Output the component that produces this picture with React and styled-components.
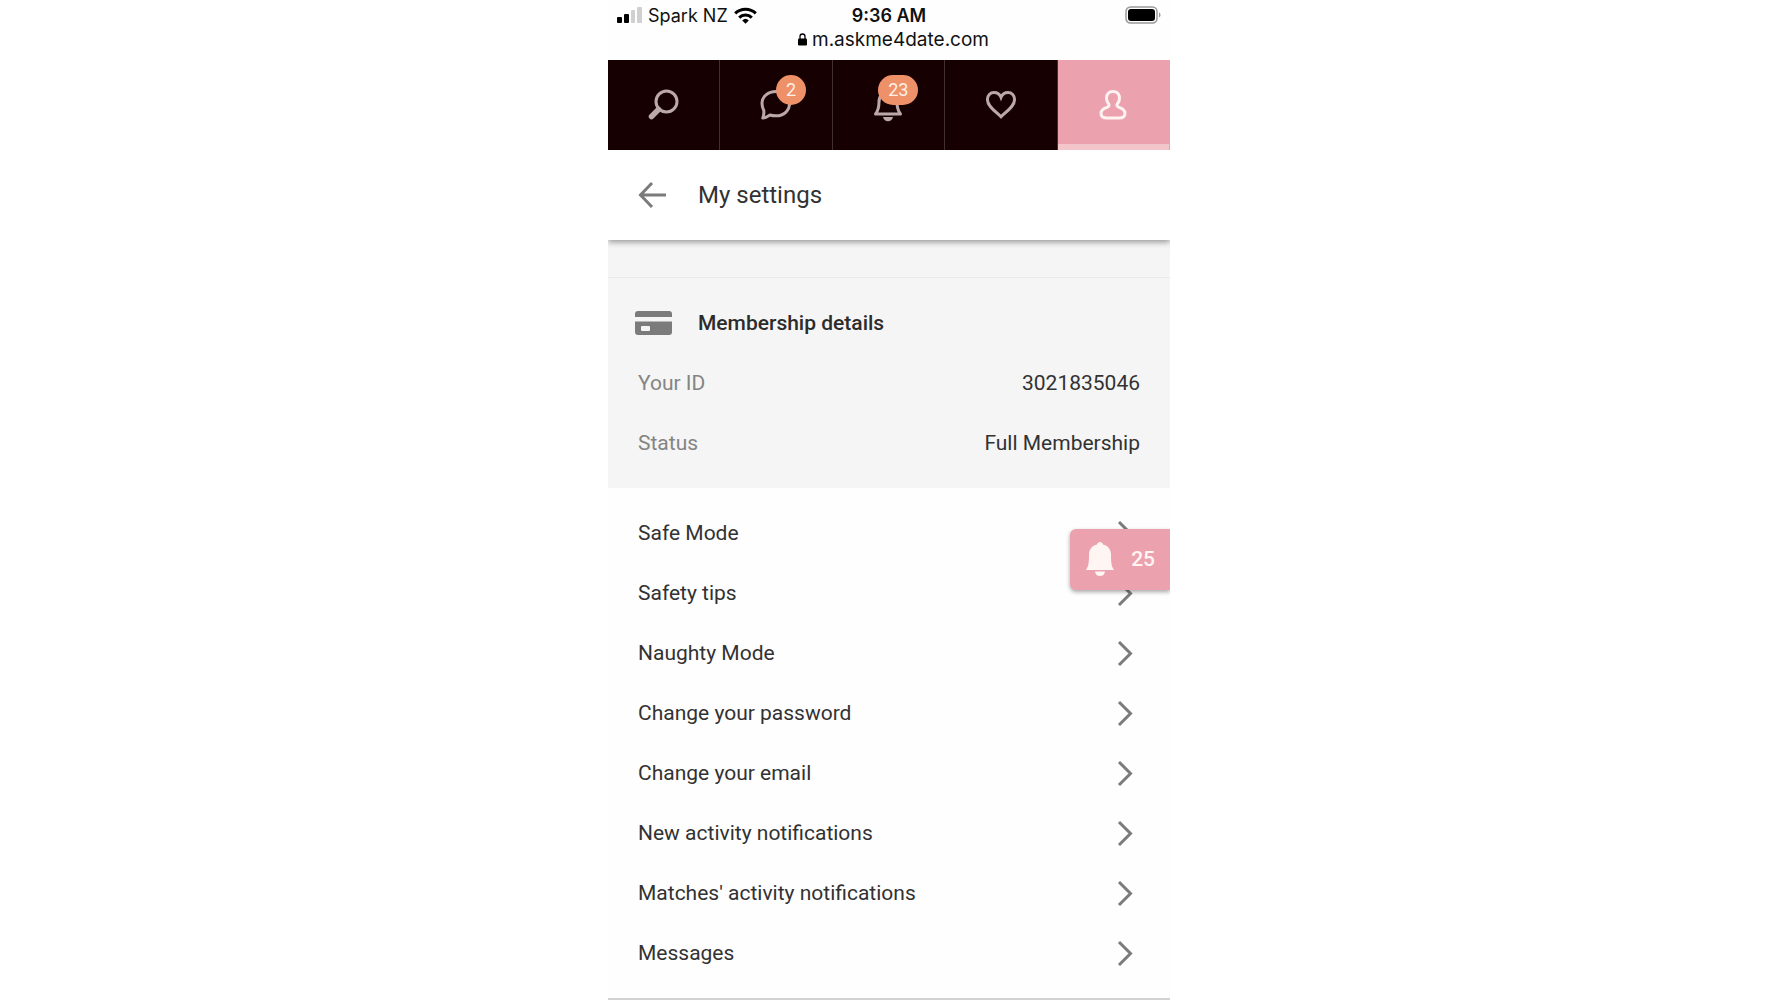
import React from "react";
import styled, { createGlobalStyle } from "styled-components";

const GlobalStyle = createGlobalStyle`
  * {
    box-sizing: border-box;
  }

  body {
    margin: 0;
    background: #fff;
    color: #323232;
    font-family: Roboto, "Liberation Sans", sans-serif;
    font-size: 21px;
  }

  svg {
    display: block;
    flex: none;
  }
`

const Screen = styled.div`
  max-width: 562px;
  margin: 0 auto;
  background: #fefefe;
`

const StatusBar = styled.div`
  height: 60px;
  padding-top: 3px;
  color: #111;
  font-family: Inter, "Liberation Sans", sans-serif;
`

const StatusRow = styled.div`
  display: grid;
  grid-template-columns: 1fr auto 1fr;
  align-items: center;
  height: 24px;
  padding: 0 9px;
  font-size: 18px;
`

const Carrier = styled.div`
  display: flex;
  align-items: center;
  gap: 6px;
`

const Time = styled.time`
  font-weight: 600;
`

const Battery = styled.div`
  display: flex;
  justify-content: flex-end;
`

const Address = styled.div`
  display: flex;
  align-items: center;
  justify-content: center;
  gap: 5px;
  height: 24px;
  padding-left: 9px;
  font-size: 19px;
`

const Nav = styled.nav`
  display: grid;
  grid-template-columns: repeat(5, 1fr);
  height: 90px;
`

const NavLink = styled.a`
  display: flex;
  align-items: center;
  justify-content: center;
  color: ${props => props.$active ? "#fff3f2" : "#bba9a9"};
  background: ${props => props.$active ? "#eba2ae" : "#170001"};
  border-right: 1px solid ${props => props.$active ? "#eba2ae" : "#413030"};
  box-shadow: ${props => props.$active ? "inset 0 -6px #f2c6cb" : "none"};
`

const NavIcon = styled.span`
  position: relative;
`

const Badge = styled.span`
  position: absolute;
  top: -12px;
  right: -12px;
  min-width: 30px;
  height: 30px;
  padding: 0 10px;
  border-radius: 15px;
  background: #ee9068;
  color: #fff0e8;
  font-size: 18px;
  line-height: 30px;
  text-align: center;
`

const Header = styled.header`
  position: relative;
  display: grid;
  grid-template-columns: 90px 1fr;
  align-items: center;
  height: 90px;
  background: #fff;
  box-shadow: 0 2px 6px rgba(0, 0, 0, 0.4);
  clip-path: inset(0 0 -10px 0);
`

const BackButton = styled.button`
  display: flex;
  justify-content: center;
  padding: 0;
  border: 0;
  background: none;
  color: #7b7b7b;
`

const Title = styled.h1`
  margin: 0;
  font-size: 24px;
  font-weight: 400;
`

const Membership = styled.section`
  padding: 37px 0 15px;
  background: #f5f5f5;
`

const SectionTitle = styled.div`
  display: grid;
  grid-template-columns: 90px 1fr;
  align-items: center;
  height: 76px;
  padding-top: 15px;
  border-top: 1px solid #e9e9e9;
  color: #7b7b7b;

  svg {
    justify-self: center;
  }

  h2 {
    margin: 0;
    color: #2c2c2c;
    font-size: 21px;
    font-weight: 500;
  }
`

const Details = styled.dl`
  margin: 0;
`

const Detail = styled.div`
  display: flex;
  align-items: center;
  justify-content: space-between;
  height: 60px;
  padding: 0 30px;

  dt {
    color: #848484;
  }

  dd {
    margin: 0;
  }
`

const Settings = styled.main`
  position: relative;
  padding: 15px 0;
  border-bottom: 2px solid #d2d2d2;
`

const SettingLink = styled.a`
  display: flex;
  align-items: center;
  justify-content: space-between;
  height: 60px;
  padding: 0 30px;
  color: #323232;
  text-decoration: none;

  svg {
    color: #7b7b7b;
  }
`

const Alerts = styled.button`
  position: absolute;
  top: 41px;
  right: 0;
  display: flex;
  align-items: center;
  gap: 16px;
  height: 61px;
  padding: 0 15px 2px;
  border: 0;
  border-radius: 6px 0 0 6px;
  background: #eba2ae;
  box-shadow: 0 2px 4px rgba(0, 0, 0, 0.35);
  clip-path: inset(-8px 0 -8px -8px);
  color: #fff5f3;
  font-family: inherit;
  font-size: 21px;
  font-weight: 500;
`

const stroke = { fill: "none", stroke: "currentColor", strokeWidth: 3 }

function SearchIcon() {
  return (
    <svg width="36" height="36" viewBox="0 0 36 36" {...stroke}>
      <circle cx="20.5" cy="14.5" r="10.5" />
      <path d="M12.5 22.5 5.5 29.5" strokeWidth="5.5" strokeLinecap="round" />
    </svg>
  );
}

function ChatIcon() {
  return (
    <svg width="36" height="36" viewBox="0 0 36 36" {...stroke}>
      <path d="M18 4.5C10 4.5 4 9.5 4 16.5c0 3 .8 5 1.800 7 .3 2.500 0 5-1 7.500 3-.3 5.200-1.600 7.200-3 2 .6 4 .8 6 .8 8 0 13.500-5.300 13.500-12.300S26 4.5 18 4.5Z" strokeLinejoin="round" />
    </svg>
  );
}

function BellIcon() {
  return (
    <svg width="36" height="36" viewBox="0 0 36 36" {...stroke}>
      <path d="M5.5 27c2.500-3 3.500-5.500 3.500-12 0-6 3.500-10 9-10s9 4 9 10c0 6.500 1 9 3.500 12Z" strokeLinejoin="round" />
      <path d="M13 30h10c-.5 2.700-2.300 4.200-5 4.200s-4.500-1.500-5-4.200Z" fill="currentColor" stroke="none" />
    </svg>
  );
}

function HeartIcon() {
  return (
    <svg width="36" height="36" viewBox="0 0 36 36" {...stroke}>
      <path d="M18 29.8C13.500 25 4.4 19.500 4.4 12.4c0-4 2.9-6.9 6.6-6.9 3.2 0 5.8 1.7 7 4.8 1.2-3.1 3.8-4.8 7-4.8 3.7 0 6.6 2.9 6.6 6.9C31.6 19.5 22.5 25 18 29.8Z" />
    </svg>
  );
}

function PersonIcon() {
  return (
    <svg width="36" height="36" viewBox="0 0 36 36" {...stroke}>
      <path d="M18 4.5c-4 0-6.500 2.700-6.500 6.700 0 2.900 1.200 4.500 2.200 5.800.8 1.200.3 2.600-1.200 3.200C9 21.600 6 22.500 6 26.500c0 3.500 2.200 4.500 6 4.500h12c3.800 0 6-1 6-4.500 0-4-3-4.900-6.500-6.300-1.500-.6-2-2-1.200-3.200 1-1.300 2.200-2.900 2.200-5.800 0-4-2.500-6.700-6.500-6.700Z" />
    </svg>
  );
}

function Chevron() {
  return (
    <svg width="30" height="30" viewBox="0 0 30 30" {...stroke}>
      <path d="M9 4 20.5 15.500 9 27" />
    </svg>
  );
}

const navItems = [
  { label: "Search", Icon: SearchIcon },
  { label: "Messages", Icon: ChatIcon, count: 2 },
  { label: "Activity", Icon: BellIcon, count: 23 },
  { label: "Matches", Icon: HeartIcon },
  { label: "Profile", Icon: PersonIcon, active: true }
]

const settings = [
  "Safe Mode",
  "Safety tips",
  "Naughty Mode",
  "Change your password",
  "Change your email",
  "New activity notifications",
  "Matches' activity notifications",
  "Messages"
]

function PhoneStatus() {
  return (
    <StatusBar>
      <StatusRow>
        <Carrier>
          <svg width="25" height="16" viewBox="0 0 25 16">
            <rect x="0" y="10" width="5" height="6" rx="1" />
            <rect x="7" y="7" width="5" height="9" rx="1" />
            <rect x="14" y="3" width="4" height="13" rx="1" fill="#d0d0d0" />
            <rect x="20" y="0" width="5" height="16" rx="1" fill="#d0d0d0" />
          </svg>
          <span>Spark NZ</span>
          <svg width="23" height="17" viewBox="0 0 23 17" fill="none" stroke="#000" strokeWidth="3">
            <path d="M1.2 6.4a14.8 14.8 0 0 1 20.6 0" />
            <path d="M5.2 10.600a9 9 0 0 1 12.6 0" />
            <path d="M8.2 13.4a4.8 4.8 0 0 1 6.6 0L11.5 16.8Z" fill="#000" stroke="none" />
          </svg>
        </Carrier>
        <Time>9:36 AM</Time>
        <Battery>
          <svg width="36" height="18" viewBox="0 0 36 18">
            <rect x="1" y="1" width="31" height="16" rx="4.5" fill="none" stroke="#999" strokeWidth="1.5" />
            <rect x="3" y="3" width="27" height="12" rx="3" />
            <path d="M34 6.5c2 .8 2 4.2 0 5Z" fill="#999" />
          </svg>
        </Battery>
      </StatusRow>
      <Address>
        <svg width="9" height="13" viewBox="0 0 9 13">
          <path d="M2 6V3.5a2.5 2.5 0 0 1 5 0V6" fill="none" stroke="#000" strokeWidth="1.3" />
          <rect y="5.5" width="9" height="7" rx="1.2" />
        </svg>
        <span>m.askme4date.com</span>
      </Address>
    </StatusBar>
  );
}

function App() {
  return (
    <React.Fragment>
      <GlobalStyle />
      <Screen>
        <PhoneStatus />
        <Nav>
          {navItems.map(({ label, Icon, count, active }) => (
            <NavLink key={label} href="#" aria-label={label} $active={active}>
              <NavIcon>
                <Icon />
                {count && <Badge>{count}</Badge>}
              </NavIcon>
            </NavLink>
          ))}
        </Nav>
        <Header>
          <BackButton aria-label="Back">
            <svg width="30" height="30" viewBox="0 0 30 30" {...stroke}>
              <path d="M14 3 2.5 15 14 27M2.5 15H28" />
            </svg>
          </BackButton>
          <Title>My settings</Title>
        </Header>
        <Membership>
          <SectionTitle>
            <svg width="37" height="24" viewBox="0 0 37 24" fill="currentColor">
              <path d="M0 6V3a3 3 0 0 1 3-3h31a3 3 0 0 1 3 3v3Z" />
              <path d="M0 10.5h37V21a3 3 0 0 1-3 3H3a3 3 0 0 1-3-3Z" />
              <rect x="6" y="15" width="9" height="5" rx="1" fill="#f5f5f5" />
            </svg>
            <h2>Membership details</h2>
          </SectionTitle>
          <Details>
            <Detail>
              <dt>Your ID</dt>
              <dd>3021835046</dd>
            </Detail>
            <Detail>
              <dt>Status</dt>
              <dd>Full Membership</dd>
            </Detail>
          </Details>
        </Membership>
        <Settings>
          {settings.map(name => (
            <SettingLink key={name} href="#">
              {name}
              <Chevron />
            </SettingLink>
          ))}
          <Alerts aria-label="25 new alerts">
            <svg width="30" height="36" viewBox="0 0 30 36" fill="currentColor">
              <path d="M15 1c1.6 0 2.7 1 2.9 2.5C23 4.7 26 8.5 26 13.5c0 8 .3 11.500 3 15.500H1c2.700-4 3-7.500 3-15.500 0-5 3-8.800 8.100-10C12.300 2 13.400 1 15 1Z" />
              <path d="M10 30.500h10c-.4 3-2.200 4.500-5 4.500s-4.600-1.500-5-4.500Z" />
            </svg>
            25
          </Alerts>
        </Settings>
      </Screen>
    </React.Fragment>
  );
}

export default App;
